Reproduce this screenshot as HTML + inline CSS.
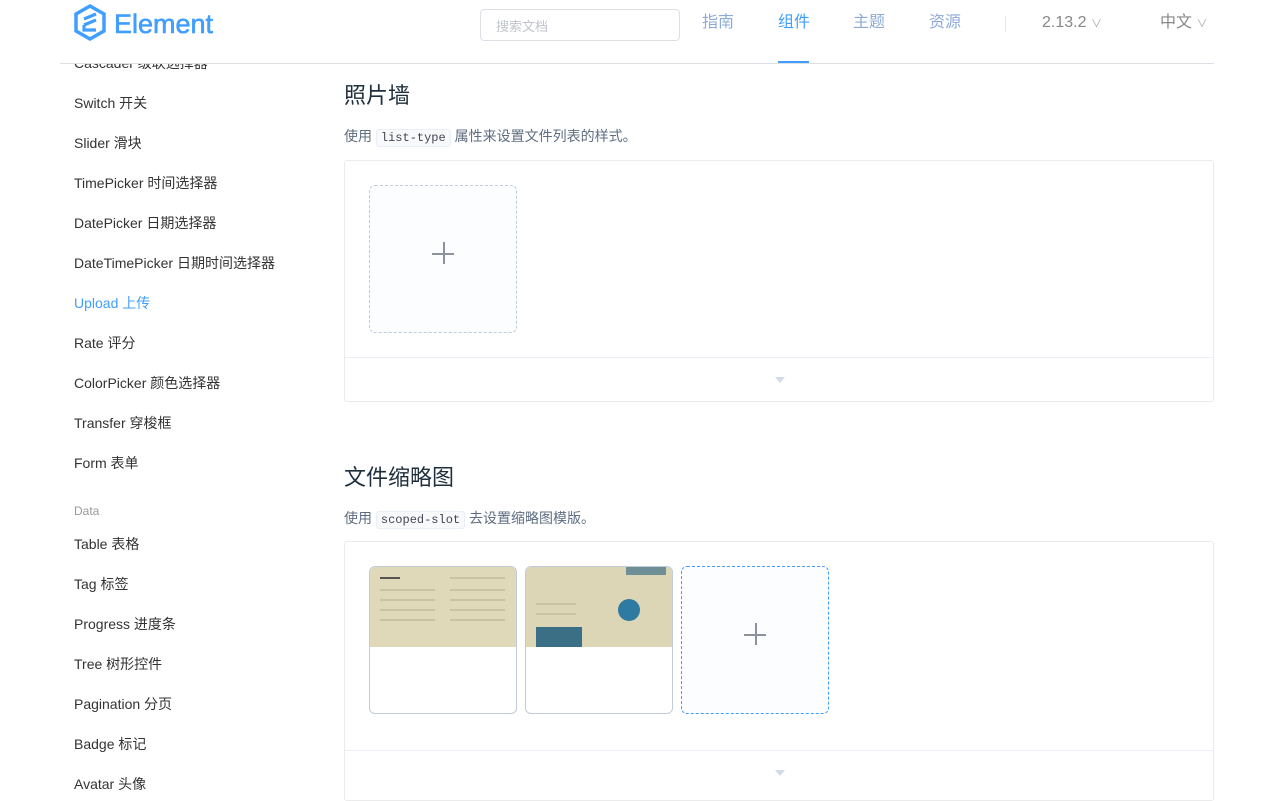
<!DOCTYPE html>
<html><head><meta charset="utf-8"><style>
*{margin:0;padding:0;box-sizing:border-box}
body{width:1273px;height:780px;overflow:hidden;background:#fff;font-family:"Liberation Sans","Noto Sans CJK SC",sans-serif;position:relative;color:#333}
.hdr{position:absolute;left:0;top:0;width:1273px;height:64px;background:#fff;z-index:2}
.hdr .line{position:absolute;left:60px;right:59px;top:63px;height:1px;background:#dcdfe6}
.logo{position:absolute;left:74px;top:3px}
.search{position:absolute;left:480px;top:9px;width:200px;height:32px;border:1px solid #dcdfe6;border-radius:4px;font-size:13px;color:#c0c4cc;padding:6px 15px}
.nav{position:absolute;top:12px;font-size:16px;line-height:22px;color:#8dabd8}
.act{color:#409eff}
.bar{position:absolute;left:778px;top:61px;width:31px;height:2px;background:#409eff}
.sep{position:absolute;left:1005px;top:16px;width:1px;height:16px;background:#e4e7ed}
.gray{color:#888}
.side{position:absolute;left:74px;font-size:14px;color:#333;line-height:16px}
.h2{position:absolute;left:344px;font-size:22px;color:#1f2f3d}
.p{position:absolute;left:344px;font-size:14px;color:#5e6d82}
code{font-family:"Liberation Mono",monospace;font-size:12px;background:#f8f9fb;border:1px solid #eaeefb;border-radius:3px;padding:1px 4px;color:#445}
.box{position:absolute;left:344px;width:870px;border:1px solid #ebebeb;border-radius:3px}
.up{position:absolute;width:148px;height:148px;border:1px dashed #c0ccda;border-radius:6px;background:#fbfdff}
.up:before{content:"";position:absolute;left:62px;top:67px;width:22px;height:1.5px;background:#8c939d}
.up:after{content:"";position:absolute;left:73px;top:56px;width:1.5px;height:22px;background:#8c939d}
.ctl{position:absolute;left:0;right:0;height:44px;border-top:1px solid #eaeefb}
.ctl i{position:absolute;left:430px;top:19px;border:5px solid transparent;border-top:6px solid #d3dce6}
.th{position:absolute;width:148px;height:148px;border:1px solid #c0ccda;border-radius:6px;overflow:hidden;background:#fff}
.th .img{height:80px;background:#e0d9b9;position:relative}
.ln{position:absolute;height:2px;background:#c9c2a3}
</style></head><body>
<div class="hdr">
<svg class="logo" width="150" height="40" viewBox="0 0 150 40"><path d="M16 3 L30 11 L30 28 L16 36 L2 28 L2 11 Z" fill="none" stroke="#409eff" stroke-width="3.5"/><path d="M10 16 L22 11 M10 22 L22 17 M10 22 L10 27 L22 27" fill="none" stroke="#409eff" stroke-width="3.2"/><text x="40" y="30" font-family="Liberation Sans" font-size="27" fill="#409eff" stroke="#409eff" stroke-width="0.6">Element</text></svg>
<div class="search">搜索文档</div>
<div class="nav" style="left:702px">指南</div>
<div class="nav act" style="left:778px">组件</div>
<div class="nav" style="left:853px">主题</div>
<div class="nav" style="left:929px">资源</div>
<div class="sep"></div>
<div class="nav gray" style="left:1042px">2.13.2 <span style="font-size:11px;color:#aaa">∨</span></div>
<div class="nav gray" style="left:1160px">中文 <span style="font-size:11px;color:#aaa">∨</span></div>
<div class="bar"></div>
<div class="line"></div>
</div>
<div class="side" style="top:55px">Cascader 级联选择器</div>
<div class="side" style="top:95px">Switch 开关</div>
<div class="side" style="top:135px">Slider 滑块</div>
<div class="side" style="top:175px">TimePicker 时间选择器</div>
<div class="side" style="top:215px">DatePicker 日期选择器</div>
<div class="side" style="top:255px">DateTimePicker 日期时间选择器</div>
<div class="side" style="top:295px;color:#409eff">Upload 上传</div>
<div class="side" style="top:335px">Rate 评分</div>
<div class="side" style="top:375px">ColorPicker 颜色选择器</div>
<div class="side" style="top:415px">Transfer 穿梭框</div>
<div class="side" style="top:455px">Form 表单</div>
<div class="side" style="top:503px;font-size:12px;color:#999">Data</div>
<div class="side" style="top:536px">Table 表格</div>
<div class="side" style="top:576px">Tag 标签</div>
<div class="side" style="top:616px">Progress 进度条</div>
<div class="side" style="top:656px">Tree 树形控件</div>
<div class="side" style="top:696px">Pagination 分页</div>
<div class="side" style="top:736px">Badge 标记</div>
<div class="side" style="top:776px">Avatar 头像</div>

<div class="h2" style="top:78px">照片墙</div>
<div class="p" style="top:126px">使用 <code>list-type</code> 属性来设置文件列表的样式。</div>
<div class="box" style="top:160px;height:242px">
<div class="up" style="left:24px;top:24px"></div>
<div class="ctl" style="top:196px"><i></i></div>
</div>

<div class="h2" style="top:460px">文件缩略图</div>
<div class="p" style="top:508px">使用 <code>scoped-slot</code> 去设置缩略图模版。</div>
<div class="box" style="top:541px;height:260px">
<div class="th" style="left:24px;top:24px"><div class="img">
<div class="ln" style="left:10px;top:10px;width:20px;background:#555"></div>
<div class="ln" style="left:10px;top:22px;width:55px"></div><div class="ln" style="left:10px;top:32px;width:55px"></div><div class="ln" style="left:10px;top:42px;width:55px"></div><div class="ln" style="left:10px;top:52px;width:55px"></div>
<div class="ln" style="left:80px;top:10px;width:55px"></div><div class="ln" style="left:80px;top:22px;width:55px"></div><div class="ln" style="left:80px;top:32px;width:55px"></div><div class="ln" style="left:80px;top:42px;width:55px"></div><div class="ln" style="left:80px;top:52px;width:55px"></div>
</div></div>
<div class="th" style="left:180px;top:24px"><div class="img" style="background:#ddd6b6">
<div style="position:absolute;left:10px;top:60px;width:46px;height:20px;background:#3b6f86"></div>
<div style="position:absolute;left:92px;top:32px;width:22px;height:22px;border-radius:50%;background:#2f7aa0"></div>
<div style="position:absolute;left:100px;top:0;width:40px;height:8px;background:#6f8f96"></div>
<div class="ln" style="left:10px;top:36px;width:40px"></div><div class="ln" style="left:10px;top:46px;width:40px"></div>
</div></div>
<div class="up" style="left:336px;top:24px;border-color:#409eff"></div>
<div class="ctl" style="top:208px"><i></i></div>
</div>
</body></html>
